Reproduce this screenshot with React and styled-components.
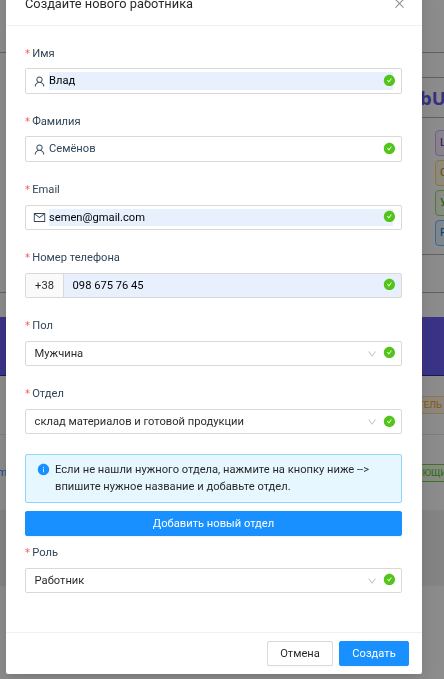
import React from "react";
import styled, { createGlobalStyle } from "styled-components";
import {
  AiOutlineUser,
  AiOutlineMail,
  AiFillCheckCircle,
  AiFillInfoCircle,
  AiOutlineClose,
  AiOutlineDown,
} from "react-icons/ai";

const GlobalStyle = createGlobalStyle`
  *, *::before, *::after { box-sizing: border-box; }
  body {
    margin: 0;
    overflow: hidden;
    background: #fff;
    font-family: Roboto, "Liberation Sans", sans-serif;
    font-size: 11.16px;
    line-height: 17.5px;
    color: rgba(0, 0, 0, 0.85);
  }
  svg { display: block; flex: none; }
`;

/* Page behind the dialog */
const Page = styled.div`
  display: flex;
  flex-direction: column;
  height: 679px;
  overflow: hidden;
`;

const Band = styled.div`
  display: flex;
  flex: none;
  justify-content: ${(p) => (p.$spread ? "space-between" : "flex-end")};
  align-items: center;
  height: ${(p) => p.$height}px;
  background: ${(p) => p.$fill || "transparent"};
  border-bottom: ${(p) => (p.$line ? `1px solid ${p.$line}` : "none")};
`;

const Panel = styled.div`
  display: flex;
  flex: none;
  flex-direction: column;
  width: 40px;
  margin-left: auto;
  border-top: 1px solid #b0b0b0;
`;

const Brand = styled.div`
  height: 40px;
  padding-left: 16px;
  border-bottom: 1px solid #b0b0b0;
  color: #6459e8;
  font: 700 18.5px/39px "Open Sans", sans-serif;
  white-space: nowrap;
`;

const Tags = styled.div`
  display: flex;
  flex-direction: column;
  gap: 4px;
  height: 137px;
  padding: 12px 0 0 31px;
  border-bottom: 1px solid #b0b0b0;
`;

const Tag = styled.div`
  flex: none;
  width: 60px;
  height: 26px;
  padding-left: 4px;
  border: 1px solid ${(p) => p.$edge};
  border-radius: 4px;
  background: ${(p) => p.$fill};
  color: ${(p) => p.$ink};
  line-height: 23px;
`;

const StatusTag = styled.div`
  display: flex;
  align-items: center;
  justify-content: flex-end;
  width: 60px;
  height: 18px;
  margin-right: ${(p) => p.$offset}px;
  padding-right: ${(p) => p.$pad}px;
  border: 1px solid ${(p) => p.$edge};
  background: ${(p) => p.$fill};
  color: ${(p) => p.$ink};
  font-size: 9.6px;
  white-space: nowrap;
`;

const MailLink = styled.span`
  width: 7px;
  display: flex;
  justify-content: flex-end;
  color: #1890ff;
`;

/* Dialog */
const Mask = styled.div`
  position: fixed;
  inset: 0;
  background: rgba(0, 0, 0, 0.45);
`;

const Dialog = styled.div`
  position: fixed;
  top: -18px;
  left: 6px;
  display: flex;
  flex-direction: column;
  width: 416px;
  height: 692px;
  border-radius: 2px;
  background: #fff;
  box-shadow: 0 2px 5px -3px rgba(0, 0, 0, 0.12), 0 5px 13px rgba(0, 0, 0, 0.08),
    0 7px 22px 6px rgba(0, 0, 0, 0.05);
`;

const Header = styled.header`
  display: flex;
  align-items: center;
  justify-content: space-between;
  height: 44px;
  padding: 0 16px 0 19px;
  border-bottom: 1px solid #f0f0f0;
`;

const Title = styled.h1`
  margin: 0;
  font-size: 12.8px;
  font-weight: 400;
  line-height: 17px;
`;

const CloseButton = styled.button`
  display: flex;
  padding: 0;
  border: 0;
  background: none;
  color: rgba(0, 0, 0, 0.45);
  font-size: 13px;
`;

const Form = styled.form`
  display: flex;
  flex: 1;
  flex-direction: column;
  padding: 18.7px 20px 0 19px;
`;

const Item = styled.div`
  display: flex;
  flex: none;
  flex-direction: column;
  height: 49.1px;
  margin-bottom: ${(p) => (p.$last ? 0 : 19.05)}px;
`;

const Label = styled.label`
  display: flex;
  gap: 3px;
  height: 23.6px;
  padding-top: 0.1px;
  color: #314659;

  &::before {
    content: "*";
    width: 4.2px;
    color: #ff4d4f;
    font: 10px/17.5px "DejaVu Sans", sans-serif;
  }
`;

const Control = styled.div`
  display: flex;
  align-items: center;
  height: 25.5px;
  padding: 0 5px 0 ${(p) => (p.$addon ? 0 : p.$icon ? 7.2 : 8.6)}px;
  overflow: hidden;
  border: 1px solid #d9d9d9;
  border-radius: 2px;
  background: ${(p) => (p.$addon ? "#e8f0fe" : "#fff")};
  color: #314659;
`;

const Value = styled.span`
  display: flex;
  flex: 1;
  align-items: center;
  height: 17.3px;
  margin-left: ${(p) => p.$indent || 0}px;
  background: ${(p) => (p.$filled ? "#e8f0fe" : "transparent")};
  color: ${(p) => p.$color || "rgba(0, 0, 0, 0.85)"};
  white-space: nowrap;
`;

const Addon = styled.span`
  display: flex;
  align-items: center;
  justify-content: center;
  align-self: stretch;
  width: 38px;
  border-right: 1px solid #d9d9d9;
  background: #fafafa;
  color: rgba(0, 0, 0, 0.85);
`;

const Arrow = styled(AiOutlineDown)`
  margin-right: 6px;
  margin-top: 1.5px;
  color: rgba(0, 0, 0, 0.25);
  font-size: 10.2px;
`;

const Check = styled(AiFillCheckCircle)`
  margin: 0 0 1.5px ${(p) => (p.$overlap ? -10 : 0)}px;
  color: #52c41a;
  font-size: 12.8px;
  border-radius: 50%;
  background: radial-gradient(circle, #fff 50%, transparent 52%);
`;

const Notice = styled.div`
  display: flex;
  flex: none;
  gap: 5px;
  height: 49px;
  margin: 0.5px 0 8px;
  padding: 6px 11px;
  border: 1px solid #91d5ff;
  border-radius: 2px;
  background: #e6f7ff;
`;

const InfoIcon = styled(AiFillInfoCircle)`
  margin-top: 2.2px;
  color: #1890ff;
  font-size: 13px;
`;

const NoticeText = styled.p`
  margin: 0;
  line-height: 17.2px;
  white-space: nowrap;
`;

const Button = styled.button`
  flex: none;
  width: ${(p) => p.$width};
  height: 25px;
  margin: 0 0 ${(p) => p.$below || 0}px;
  padding: 0;
  border: 1px solid ${(p) => (p.$primary ? "#1890ff" : "#d9d9d9")};
  border-radius: 2px;
  background: ${(p) => (p.$primary ? "#1890ff" : "#fff")};
  box-shadow: 0 1.5px 0 rgba(0, 0, 0, ${(p) => (p.$primary ? 0.04 : 0.015)});
  color: ${(p) => (p.$primary ? "#fff" : "rgba(0, 0, 0, 0.85)")};
  font: inherit;
`;

const Footer = styled.footer`
  display: flex;
  align-items: center;
  justify-content: flex-end;
  gap: 6px;
  height: 42px;
  padding-right: 13px;
  border-top: 1px solid #f0f0f0;
`;

function TextField({ label, icon, value, autofilled }) {
  return (
    <Item>
      <Label>{label}</Label>
      <Control $icon>
        {icon}
        <Value $indent={2.8} $filled={autofilled} $color={autofilled ? "#000" : "#314659"}>
          {value}
        </Value>
        <Check $overlap />
      </Control>
    </Item>
  );
}

function SelectField({ label, value, last }) {
  return (
    <Item $last={last}>
      <Label>{label}</Label>
      <Control>
        <Value>{value}</Value>
        <Arrow />
        <Check />
      </Control>
    </Item>
  );
}

export default function App() {
  return (
    <>
      <GlobalStyle />
      <Page>
        <Band $height={53} $line="#b0b0b0" />
        <Band $height={24} />
        <Panel>
          <Brand>bU</Brand>
          <Tags>
            <Tag $edge="#d3adf7" $fill="#f9f0ff" $ink="#531dab">L</Tag>
            <Tag $edge="#ffd666" $fill="#fffbe6" $ink="#d48806">С</Tag>
            <Tag $edge="#95de64" $fill="#f6ffed" $ink="#389e0d">У</Tag>
            <Tag $edge="#69c0ff" $fill="#e6f7ff" $ink="#096dd9">Р</Tag>
          </Tags>
        </Panel>
        <Band $height={38} $line="#b0b0b0" />
        <Band $height={24} />
        <Band $height={59} $fill="#6a5ef5" $line="#342a9e" />
        <Band $height={59} $line="#e4e4e4">
          <StatusTag $offset={-3} $pad={4} $edge="#ffd591" $fill="#fff7e6" $ink="#fa9d14">
            ТЕЛЬ
          </StatusTag>
        </Band>
        <Band $height={75} $spread>
          <MailLink>m</MailLink>
          <StatusTag $offset={-14} $pad={3} $edge="#73d13d" $fill="#f6ffed" $ink="#52c41a">
            ЯЮЩИЙ
          </StatusTag>
        </Band>
        <Band $height={76} $fill="#f0f0f0" />
      </Page>

      <Mask />
      <Dialog role="dialog">
        <Header>
          <Title>Создайте нового работника</Title>
          <CloseButton aria-label="Закрыть">
            <AiOutlineClose />
          </CloseButton>
        </Header>
        <Form>
          <TextField label="Имя" icon={<AiOutlineUser size={13} />} value="Влад" autofilled />
          <TextField label="Фамилия" icon={<AiOutlineUser size={13} />} value="Семёнов" />
          <TextField label="Email" icon={<AiOutlineMail size={13} />} value="semen@gmail.com" autofilled />
          <Item>
            <Label>Номер телефона</Label>
            <Control $addon>
              <Addon>+38</Addon>
              <Value $indent={8.6} $color="#000">098 675 76 45</Value>
              <Check />
            </Control>
          </Item>
          <SelectField label="Пол" value="Мужчина" />
          <SelectField label="Отдел" value="склад материалов и готовой продукции" />
          <Notice>
            <InfoIcon />
            <NoticeText>
              Если не нашли нужного отдела, нажмите на кнопку ниже --&gt;
              <br />
              впишите нужное название и добавьте отдел.
            </NoticeText>
          </Notice>
          <Button type="button" $primary $width="100%" $below={8}>
            Добавить новый отдел
          </Button>
          <SelectField label="Роль" value="Работник" last />
        </Form>
        <Footer>
          <Button $width="66px">Отмена</Button>
          <Button $primary $width="70px">Создать</Button>
        </Footer>
      </Dialog>
    </>
  );
}
